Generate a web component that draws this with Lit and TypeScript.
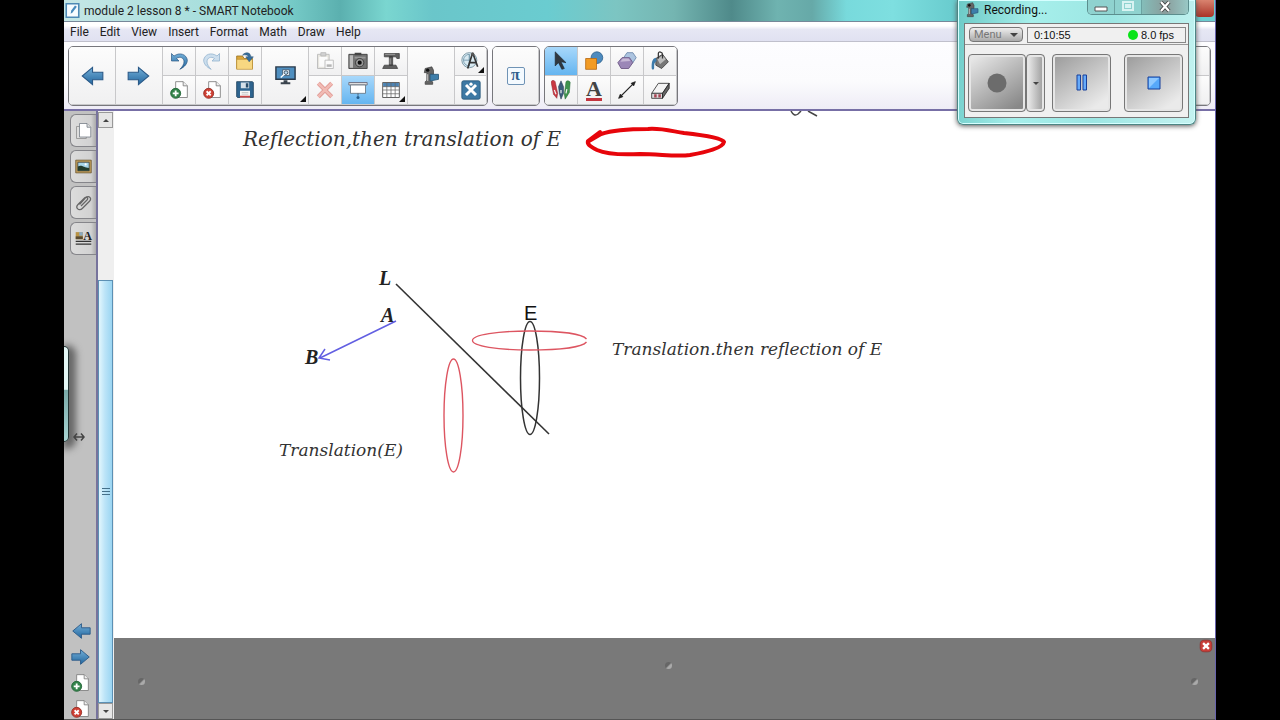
import { LitElement, html, css, svg } from "lit";
import { customElement } from "lit/decorators.js";
import { classMap } from "lit/directives/class-map.js";

const arrowRight = svg`<path d="M2 8.500h9.500V4l9.500 8-9.500 8v-4.500H2z" fill="url(#blue)" stroke="#2b5a88" stroke-width="1"/>`;
const page = svg`<path d="M8 2h9l5 5v14H8z" fill="#fff" stroke="#7b7b7b"/><path d="M17 2v5h5" fill="#eee" stroke="#7b7b7b"/>`;

const icons: Record<string, unknown> = {
  back: svg`<g transform="matrix(-1 0 0 1 24 0)">${arrowRight}</g>`,
  forward: arrowRight,
  undo: svg`<path d="M3 3v9h9L9 9c4-3 9-1 9 4 0 3-2 6-5 9 6-3 9-7 9-11C21 4 13 1 6 6z" fill="url(#blue)" stroke="#24527f" stroke-width=".8"/>`,
  redo: svg`<g opacity=".55" transform="matrix(-1 0 0 1 24 0)"><path d="M3 3v9h9L9 9c4-3 9-1 9 4 0 3-2 6-5 9 6-3 9-7 9-11C21 4 13 1 6 6z" fill="#a9cbe6" stroke="#4780b0"/></g>`,
  open: svg`<path d="M2 6h7l2 3h10v12H2z" fill="#dba73b" stroke="#9b7523"/><path d="M2 10h19v12H2z" fill="#f7d781" stroke="#b98d32" stroke-width=".8"/><path d="M9 5c4-5 10-3 10 2h3l-5 6-4-6h3c0-2-3-3-7-2z" fill="#376f9d" stroke="#264e70" stroke-width=".6"/>`,
  addPage: svg`${page}<circle cx="8" cy="16" r="6" fill="#33834a" stroke="#1d6131"/><path d="M8 12.500v7M4.500 16h7" stroke="#fff" stroke-width="2.200"/>`,
  deletePage: svg`${page}<circle cx="8" cy="16" r="6" fill="#cf4034" stroke="#922920"/><path d="M5.500 13.500l5 5m0-5l-5 5" stroke="#fff" stroke-width="2.200"/>`,
  save: svg`<path d="M2 2h19l1 1v18H3l-1-1z" fill="#2e648f" stroke="#21435f"/><path d="M7 3h10v7H7z" fill="#d5e0e8"/><path d="M13 4h3v5h-3z" fill="#294c69"/><path d="M6 13h12v8H6z" fill="#f7f7f7"/><path d="M6 19h12v2H6z" fill="#c44"/><path d="M8 15h8M8 17h8" stroke="#aaa" stroke-width=".7"/>`,
  monitor: svg`<path d="M2 3h20v13H2z" fill="#4f8fc0" stroke="#29394a" stroke-width="1.500"/><path d="M10 17h4v2h3v2H7v-2h3z" fill="#39434d"/><path d="M9 6h7v6H9z" fill="#e9f3fb" stroke="#345" stroke-width=".7"/><circle cx="12.500" cy="9" r="1.900" fill="#b9d8ef" stroke="#234" stroke-width=".8"/><path d="M11 10.500L7 14" stroke="#fff" stroke-width="1.500"/>`,
  paste: svg`<g opacity=".5"><path d="M3 4h14v17H3z" fill="#d8d5c8" stroke="#777"/><path d="M5 7h10v12H5z" fill="#fff"/><path d="M7 2h6v4H7z" fill="#aaa" stroke="#777"/><path d="M12 11h10v10H12z" fill="#fff" stroke="#777"/><path d="M14 16h6v3h-6z" fill="#777"/></g>`,
  camera: svg`<path d="M1 4h22v17H1z" fill="#747474" stroke="#383838"/><path d="M2 5h4v15H2z" fill="#bbb"/><path d="M8 2h8v3H8z" fill="#444"/><path d="M8 7h13v2H8z" fill="#999"/><circle cx="14" cy="14" r="5" fill="#999" stroke="#333"/><circle cx="14" cy="14" r="2.500" fill="#111"/>`,
  docCamera: svg`<path d="M4 3h18v6h-3l-1-2H4zM10 7h4v10h-4zM4 17h14l2 4H2z" fill="#606060" stroke="#343434" stroke-width=".8"/><path d="M5 4h12M11 9v7" stroke="#aaa"/>`,
  remove: svg`<g opacity=".65"><path d="M4 4l16 16M20 4L4 20" stroke="#d5675e" stroke-width="5"/><path d="M4 4l16 16M20 4L4 20" stroke="#ee9b91" stroke-width="3"/></g>`,
  screen: svg`<path d="M1 3h22v3H1z" fill="#ddd" stroke="#667"/><path d="M3 6h18v10H3z" fill="#fff" stroke="#66757f"/><path d="M12 16v3" stroke="#456"/><circle cx="12" cy="21" r="1.800" fill="#245d8b"/>`,
  table: svg`<path d="M2 3h20v18H2z" fill="#fff" stroke="#444"/><path d="M2.500 3.500h19V8h-19z" fill="#4c83b3"/><path d="M2 8h20M2 12h20M2 16.500h20M7 3v18M12 3v18M17 3v18" stroke="#666" stroke-width=".9"/>`,
  camcorder: svg`<path d="M5 3l8-2 2 4v5h-4v7l3 2v3H5v-3l2-2V8H4z" fill="#656565" stroke="#383838" stroke-width=".8"/><circle cx="8" cy="5" r="2" fill="#111"/><path d="M11 10h10v6l-10 2z" fill="#3e7eaa" stroke="#285777"/><path d="M8 10v8" stroke="#bbb" stroke-width="1.500"/>`,
  measure: svg`<circle cx="10" cy="11" r="9" fill="#d9eaf2" stroke="#6b8999"/><path d="M10 4a7 7 0 0 0 0 14zM10 4v14M3 11h7" fill="none" stroke="#7095a9"/><path d="M14 2l-6 19M14 2l6 17M10 14h9" fill="none" stroke="#353535" stroke-width="2"/><circle cx="14" cy="4" r="2" fill="#555"/>`,
  tools: svg`<rect x="1" y="1" width="22" height="22" rx="2" fill="#3d79a4" stroke="#285778"/><path d="M6 6l12 12M18 6L6 18" fill="none" stroke="#fff" stroke-width="3.500"/><circle cx="12" cy="5" r="2" fill="#fff"/>`,
  select: svg`<path d="M5 1l13 13-6-1 4 8-3 1-4-8-4 4z" fill="#303840" stroke="#1c242b" stroke-width=".7"/>`,
  shapes: svg`<circle cx="15.500" cy="8" r="7" fill="#4d8bbf" stroke="#2e618e"/><path d="M2 9h13v13H2z" fill="#f29b24" stroke="#b96a12"/>`,
  polygons: svg`<path d="M12 2h7l4 6-4 6h-7L8 8z" fill="#acc4e0" stroke="#6985a8"/><path d="M6 8h9l4 6-5 7H5l-4-7z" fill="#9b87b7" stroke="#66517f"/><path d="M4 13l3-4h7l2 3z" fill="#c7b9d6"/>`,
  fill: svg`<path d="M7 9l8-5 7 9-8 8-7-4z" fill="#777" stroke="#3d3d3d"/><path d="M9 10l6-5 4 5-7 6z" fill="#bdbdbd"/><path d="M10 9V3c0-3 5-2 5 1v5" fill="none" stroke="#333" stroke-width="1.500"/><path d="M7 8c-5 1-5 7-5 12 0 3 3 3 3 0 0-4 0-6 3-8z" fill="#3c7bab"/>`,
  pens: svg`<path d="M0 2c1-2 4-2 5 0l3 14-1 6-4-5z" fill="#c93842" stroke="#8b2530" stroke-width=".6"/><path d="M9 8l3-7 3 7v8l-3 7-2-7z" fill="#3b5c7b" stroke="#1f354b" stroke-width=".6"/><path d="M18 2c1-2 5-1 5 1l-1 12-5 8-1-6z" fill="#3f934e" stroke="#236634" stroke-width=".6"/><path d="M4 12l2 5M12 12v4M19 11l-1 5" stroke="#eee" stroke-width="1.500"/>`,
  line: svg`<path d="M4 20L20 4" stroke="#222" stroke-width="1.500"/><path d="M2 22l2-5 3 3zM22 2l-2 5-3-3z" fill="#222" stroke="#222"/>`,
  eraser: svg`<path d="M10 4h13l-8 12H2z" fill="#f4f4f4" stroke="#333"/><path d="M2 16h13v6H2z" fill="#ddd" stroke="#333"/><path d="M15 16l8-12v6l-8 12z" fill="#666" stroke="#222"/><path d="M5 17h3v4H5zM10 17h3v4h-3z" fill="#a64352"/>`,
  sorter: svg`<path d="M2 6h13v16H2z" fill="#ddd" stroke="#888"/><path d="M6 2h10l5 5v13H6z" fill="#fff" stroke="#6f7780"/><path d="M16 2v5h5" fill="#ddd" stroke="#6f7780"/>`,
  gallery: svg`<path d="M1 3h22v18H1z" fill="#bd9b58" stroke="#65502a"/><path d="M4 6h16v12H4z" fill="#a7d4e8" stroke="#333"/><path d="M4 12c6-3 8 2 16 2v4H4z" fill="#233b2c"/><circle cx="15" cy="9" r="1.500" fill="#fff"/>`,
  clip: svg`<path d="M6 14l8-9c5-4 9 1 5 5l-9 9c-5 5-10-1-6-5l9-9c3-2 5 1 3 3l-8 8" fill="none" stroke="#666" stroke-width="1.700"/>`,
  properties: svg`<path d="M1 3h10v10H1z" fill="#b99345"/><path d="M1 9h10v4H1z" fill="#594b32"/><path d="M6 3h5v5H6z" fill="#8baac0"/><path d="M1 16h22M1 20h22" stroke="#333" stroke-width="1.600"/>`,
  logo: svg`<path d="M2 1h20v22H2z" fill="#f7fcff" stroke="#4e8ab5" stroke-width="2.500"/><path d="M9 17l1-5 6-8 3 2-7 9z" fill="#488bbd"/>`,
  close: svg`<rect x="2" y="2" width="20" height="20" rx="7" fill="#c83e38" stroke="#8b2521"/><path d="M7 7l10 10M17 7L7 17" stroke="#fff" stroke-width="4"/>`,
};

const icon = (name: string, size = 20) => html`
  <svg class="icon" width=${size} height=${size} viewBox="0 0 24 24" aria-hidden="true">
    <defs><linearGradient id="blue" x1="0" y1="0" x2="0" y2="1"><stop stop-color="#73afd8"/><stop offset="1" stop-color="#23669e"/></linearGradient></defs>
    ${icons[name]}
  </svg>`;

type Tool = { name: string; label: string; tall?: boolean; active?: boolean; menu?: boolean; letter?: string };

const mainTools: Tool[] = [
  { name: "back", label: "Previous page", tall: true },
  { name: "forward", label: "Next page", tall: true },
  { name: "undo", label: "Undo" },
  { name: "addPage", label: "Add page" },
  { name: "redo", label: "Redo" },
  { name: "deletePage", label: "Delete page" },
  { name: "open", label: "Open" },
  { name: "save", label: "Save" },
  { name: "monitor", label: "View screens", tall: true, menu: true },
  { name: "paste", label: "Paste" },
  { name: "remove", label: "Delete" },
  { name: "camera", label: "Screen capture" },
  { name: "screen", label: "Screen shade", active: true },
  { name: "docCamera", label: "Document camera" },
  { name: "table", label: "Table", menu: true },
  { name: "camcorder", label: "Recorder", tall: true },
  { name: "measure", label: "Measurement tools", menu: true },
  { name: "tools", label: "Customize" },
];

const drawTools: Tool[] = [
  { name: "select", label: "Select", active: true },
  { name: "pens", label: "Pens" },
  { name: "shapes", label: "Shapes" },
  { name: "text", label: "Text", letter: "A" },
  { name: "polygons", label: "Regular polygons" },
  { name: "line", label: "Lines" },
  { name: "fill", label: "Fill" },
  { name: "eraser", label: "Eraser" },
];

const base = css`
  * { box-sizing: border-box; }
  button { font: inherit; color: inherit; margin: 0; padding: 0; border: 0; background: none; }
  .icon { display: block; flex: none; }
`;

@customElement("tool-bar")
export class ToolBar extends LitElement {
  static styles = [base, css`
    :host { display: flex; gap: 4px; padding: 4px; height: 69px; background: linear-gradient(#fdfdff, #fbfbfd 60%, #eeecf6); border-bottom: 2px solid #776fa6; }
    .group { display: grid; grid-template-rows: 29px 29px; grid-auto-flow: column; border: 1px solid #77777c; border-radius: 5px; overflow: hidden; background: #f8f8f8; flex: none; height: 60px; }
    .main { grid-template-columns: 47px 47px repeat(3, 33px) 47px repeat(3, 33px) 47px 32px; }
    .math { grid-template-columns: 46px; }
    .draw { grid-template-columns: repeat(4, 33px); }
    .end { grid-template-columns: 33px; margin-left: auto; }
    .tool { position: relative; display: flex; align-items: center; justify-content: center; background: linear-gradient(#fcfcfc, #f0f0f1); border-right: 1px solid #c8c8ca; border-bottom: 1px solid #c8c8ca; }
    .tall { grid-row: span 2; }
    .active { background: linear-gradient(#a8d8fb, #65b5f0); }
    .menu::after { content: ""; position: absolute; right: 2px; bottom: 2px; border-left: 6px solid transparent; border-bottom: 6px solid #111; }
    .letter { font: bold 22px/18px "Liberation Serif", serif; color: #444; border-bottom: 3px solid #c3343e; }
    .pi { display: block; font: bold 16px/14px "Liberation Serif", serif; color: #315f8d; border: 1px solid #6f93b5; background: #f4faff; width: 18px; height: 18px; border-radius: 2px; }
  `];

  private tool(t: Tool) {
    const size = t.name === "back" || t.name === "forward" ? 26 : t.name === "monitor" ? 23 : 20;
    return html`<button class=${classMap({ tool: true, tall: !!t.tall, active: !!t.active, menu: !!t.menu })} aria-label=${t.label}>
      ${t.letter ? html`<span class="letter">${t.letter}</span>` : icon(t.name, size)}
    </button>`;
  }

  render() {
    return html`
      <div class="group main">${mainTools.map((t) => this.tool(t))}</div>
      <div class="group math"><button class="tool tall" aria-label="Math tools"><span class="pi">π</span></button></div>
      <div class="group draw">${drawTools.map((t) => this.tool(t))}</div>
      <div class="group end"><button class="tool" aria-label="Move toolbar"></button><button class="tool" aria-label="More"></button></div>
    `;
  }
}

@customElement("recorder-window")
export class RecorderWindow extends LitElement {
  static styles = [base, css`
    :host { display: block; padding: 0 6px 6px; background: linear-gradient(100deg, #6bc9c6, #a6efeb 30%, #9ce6e3 60%, #c5f3f1); border: 1px solid #4d8584; border-top: 0; border-radius: 0 0 6px 6px; box-shadow: inset 0 0 0 1px #d5ffff, 0 1px 5px #555; font: 12px/16px Roboto, sans-serif; color: #111; }
    .title { display: flex; align-items: flex-start; height: 23px; }
    .name { display: flex; align-items: center; gap: 4px; flex: 1; height: 20px; }
    .windows { display: flex; border: 1px solid #5c8e8e; border-top: 0; border-radius: 0 0 5px 5px; overflow: hidden; height: 15px; }
    .windows button { width: 27px; display: flex; justify-content: center; align-items: center; border-right: 1px solid #6ba3a2; background: #8fd2cf; }
    .windows button:last-child { width: 46px; background: linear-gradient(90deg, #84bdb9, #8a9d9c, #98c8c5); border: 0; }
    .panel { border: 1px solid #777; background: #f0f0f0; }
    .status { display: flex; gap: 4px; padding: 3px 2px 2px 4px; height: 21px; border-bottom: 1px solid #999; }
    .drop { width: 54px; height: 15px; display: flex; align-items: center; justify-content: space-between; padding: 0 4px; border: 1px solid #777; border-radius: 4px; background: linear-gradient(#eee, #aaa); color: #777; font-size: 11px; line-height: 13px; }
    .caret { border: 4px solid transparent; border-top-color: #444; border-bottom: 0; }
    .readout { flex: 1; display: flex; align-items: center; gap: 3px; padding: 0 11px 0 6px; border: 1px solid #888; font: 11px/14px "Liberation Sans", sans-serif; height: 16px; }
    .lamp { width: 10px; height: 10px; border-radius: 50%; background: #08e416; margin-left: auto; }
    .actions { display: flex; padding: 9px 4px 4px 3px; height: 72px; }
    .key { height: 58px; width: 59px; border: 1px solid #777; border-radius: 4px; box-shadow: inset 0 0 0 2px #e6e6e6; background: linear-gradient(145deg, #999, #eaeaea 85%); display: flex; align-items: center; justify-content: center; }
    .record { background: linear-gradient(145deg, #eee, #888 90%); width: 58px; }
    .narrow { width: 19px; background: linear-gradient(90deg, #eee, #999); }
    .narrow .caret { border-width: 3px; border-bottom: 0; }
    .pause { margin-left: 7px; }
    .stop { margin-left: 13px; }
  `];

  render() {
    return html`
      <div class="title">
        <span class="name">${icon("camcorder", 16)}Recording...</span>
        <span class="windows">
          <button aria-label="Minimize"><svg width="16" height="14"><path d="M2 7h12v4H2z" fill="#fff" stroke="#555"/></svg></button>
          <button aria-label="Maximize"><svg width="16" height="14"><path d="M3 2h10v8H3zM6 5h4v2H6z" fill="none" stroke="#d9f3f2" stroke-width="2"/></svg></button>
          <button aria-label="Close"><svg width="16" height="14"><path d="M4 2l8 9M12 2l-8 9" stroke="#444" stroke-width="4"/><path d="M4 2l8 9M12 2l-8 9" stroke="#fff" stroke-width="2.200"/></svg></button>
        </span>
      </div>
      <div class="panel">
        <div class="status">
          <button class="drop">Menu<span class="caret"></span></button>
          <div class="readout"><span>0:10:55</span><span class="lamp"></span><span>8.0 fps</span></div>
        </div>
        <div class="actions">
          <button class="key record" aria-label="Record"><svg width="20" height="20"><circle cx="10" cy="10" r="9.500" fill="#6c6c6c"/></svg></button>
          <button class="key narrow" aria-label="Record options"><span class="caret"></span></button>
          <button class="key pause" aria-label="Pause"><svg width="12" height="18"><path d="M1 1h3.500v15H1zM7 1h3.500v15H7z" fill="#65aafa" stroke="#173f9b"/></svg></button>
          <button class="key stop" aria-label="Stop"><svg width="14" height="14"><path d="M1 1h12v12H1z" fill="#57a8fa" stroke="#173f9b"/><path d="M2 12V2h10z" fill="#8fc8ff"/></svg></button>
        </div>
      </div>`;
  }
}

@customElement("lesson-canvas")
export class LessonCanvas extends LitElement {
  static styles = css`
    :host { display: block; position: relative; background: #fff; overflow: hidden; }
    .drawing { position: absolute; inset: 0; width: 100%; height: 100%; }
    .formula { font: italic 17px "DejaVu Serif", serif; fill: #333; }
    .large { font-size: 20px; }
    .point { font: italic bold 20px "Liberation Serif", serif; fill: #222; }
    .shape { font: 20px "Liberation Sans", sans-serif; fill: #111; }
  `;

  render() {
    return html`<svg class="drawing" role="img" aria-label="Reflection and translation of E">
      <path d="M677 0q3 6 7 3l3-3M694 0l9 5" fill="none" stroke="#444" stroke-width="1.500"/>
      <text class="formula large" x="129" y="35">Reflection,then translation of E</text>
      <text class="formula" x="498" y="244">Translation.then reflection of E</text>
      <text class="formula" x="165" y="345">Translation(E)</text>
      <text class="point" x="265" y="174">L</text>
      <text class="point" x="267" y="211">A</text>
      <text class="point" x="191" y="253">B</text>
      <text class="shape" x="410" y="209">E</text>
      <path d="M475 30l12-7c12-4 28-5 47-5 13-1 23 2 36 4 19 2 38 5 40 9-1 6-18 10-34 13-14 2-30-1-50-1-20 1-34 0-43-4-8-4-10-6-9-9l12-9" fill="none" stroke="#e7050b" stroke-width="4" stroke-linejoin="round" stroke-linecap="round"/>
      <path d="M282 173l153 150" stroke="#333" stroke-width="1.600"/>
      <path d="M282 210l-76 37M211 238l-6 9 11 2" fill="none" stroke="#625fe2" stroke-width="1.500"/>
      <ellipse cx="416" cy="267" rx="9.500" ry="56.500" fill="none" stroke="#333" stroke-width="1.500"/>
      <path d="M472.500 228c-4-5-26-8-57-8-32 0-57 4-57 9.500s25 9.500 57 9.500c31 0 53-3 57-8" fill="none" stroke="#dd5561" stroke-width="1.300"/>
      <ellipse cx="339.500" cy="304.500" rx="9.500" ry="56.500" fill="none" stroke="#dd5561" stroke-width="1.400"/>
    </svg>`;
  }
}

@customElement("app-root")
export class AppRoot extends LitElement {
  static styles = [base, css`
    :host { display: block; background: #000; font: 12px/20px Roboto, sans-serif; color: #222; }
    .app { position: relative; display: flex; flex-direction: column; height: 100vh; margin: 0 64px; overflow: hidden; background: #fff; border-right: 1px solid #6863ad; }
    .title { display: flex; align-items: center; gap: 4px; height: 22px; padding-left: 1px; background: linear-gradient(90deg, #c5e6e5, #a4dedc 14%, #74c9c6 20%, #5bb0af 24%, #7ad6d0 28%, #6ac6ca 32%, #6accd0 42%, #7cc5c2 48%, #74b5b1 53%, #4f8a8a 58%, #6fb3b0 62%, #66a9a8 65%, #78dadc 68%, #7edfe0 72%, #6acdcf 77%); border-bottom: 1px solid #789; }
    .closeapp { width: 19px; height: 17px; margin: 0 1px 5px auto; background: linear-gradient(#d9836f, #a93327); border-radius: 0 0 4px 4px; }
    .menu { display: flex; gap: 11px; height: 20px; padding: 0 6px; background: linear-gradient(#fff 20%, #e6e7f4 40%, #e0e1f1); border-bottom: 1px solid #c0c0cc; }
    .body { flex: 1; display: flex; min-height: 0; border-bottom: 1px solid #555; }
    .side { width: 34px; display: flex; flex-direction: column; gap: 3px; padding: 3px 0 0 6px; background: #c1c1c1; border-right: 2px solid #77739c; flex: none; }
    .tab { height: 33px; display: flex; align-items: center; justify-content: center; border: 1px solid #85858a; border-right: 0; border-radius: 6px 0 0 6px; background: linear-gradient(90deg, #dcdcdc, #d2d2d2 80%, #aaa); flex: none; }
    .properties { display: grid; justify-items: end; align-items: start; }
    .properties > * { grid-area: 1 / 1; }
    .glyph { font: bold 12px/12px "Liberation Serif", serif; }
    .pages { display: flex; flex-direction: column; gap: 6px; margin-top: auto; }
    .pages button { height: 20px; display: flex; align-items: center; }
    .scroll { width: 16px; display: flex; flex-direction: column; padding: 1px 1px 0 0; background: #efefef; flex: none; }
    .step { height: 16px; display: flex; align-items: center; justify-content: center; border: 1px solid #999; background: #e6e6e6; flex: none; }
    .up { border: 3px solid transparent; border-bottom-color: #444; border-top: 0; }
    .down { border: 3px solid transparent; border-top-color: #444; border-bottom: 0; }
    .track { flex: 1; display: flex; flex-direction: column; }
    .before { flex: 152; }
    .thumb { flex: 422; display: flex; flex-direction: column; align-items: center; justify-content: center; gap: 2px; border: 1px solid #5c90b4; background: linear-gradient(90deg, #e2f6fd, #bce4f8 45%, #9ad5f2); }
    .grip { width: 8px; height: 1px; background: #44708a; }
    .work { flex: 1; min-width: 0; display: flex; flex-direction: column; }
    .canvas { flex: 1; }
    .shade { position: relative; height: 81px; background: #797979; flex: none; }
    .shade button { position: absolute; right: 2px; top: 1px; }
    .dot { position: absolute; width: 7px; height: 7px; border-radius: 50%; background: linear-gradient(135deg, #666 45%, #aaa 60%); }
    .left { left: 24px; bottom: 34px; }
    .middle { left: 50%; top: 24px; }
    .right { right: 17px; bottom: 34px; }
    .flyout { position: absolute; left: 0; top: 346px; width: 5px; height: 96px; border: 1px solid #233; border-left: 0; border-radius: 0 5px 5px 0; background: linear-gradient(#e4f7f6 45%, #7aaaa9 46%, #a9d5d4); box-shadow: 3px 3px 7px 4px #666; }
    .resize { position: absolute; left: 9px; top: 431px; }
    .recorder { position: absolute; right: 19px; top: 0; width: 239px; }
  `];

  render() {
    const menus = ["File", "Edit", "View", "Insert", "Format", "Math", "Draw", "Help"];
    return html`
      <div class="app">
        <header class="title">${icon("logo", 15)}<span>module 2 lesson 8 * - SMART Notebook</span><button class="closeapp" aria-label="Close"></button></header>
        <nav class="menu">${menus.map((m) => html`<button>${m}</button>`)}</nav>
        <tool-bar></tool-bar>
        <main class="body">
          <aside class="side">
            <button class="tab" aria-label="Page sorter">${icon("sorter", 18)}</button>
            <button class="tab" aria-label="Gallery">${icon("gallery", 17)}</button>
            <button class="tab" aria-label="Attachments">${icon("clip", 18)}</button>
            <button class="tab" aria-label="Properties"><span class="properties">${icon("properties", 17)}<span class="glyph">A</span></span></button>
            <div class="pages">
              <button aria-label="Previous page">${icon("back", 22)}</button>
              <button aria-label="Next page">${icon("forward", 22)}</button>
              <button aria-label="Add page">${icon("addPage", 20)}</button>
              <button aria-label="Delete page">${icon("deletePage", 20)}</button>
            </div>
          </aside>
          <div class="scroll">
            <button class="step" aria-label="Scroll up"><span class="up"></span></button>
            <div class="track"><div class="before"></div><div class="thumb"><span class="grip"></span><span class="grip"></span><span class="grip"></span></div></div>
            <button class="step" aria-label="Scroll down"><span class="down"></span></button>
          </div>
          <section class="work">
            <lesson-canvas class="canvas"></lesson-canvas>
            <div class="shade"><span class="dot left"></span><span class="dot middle"></span><span class="dot right"></span><button aria-label="Close shade">${icon("close", 14)}</button></div>
          </section>
        </main>
        <div class="flyout"></div>
        <svg class="resize" width="12" height="12" aria-hidden="true"><path d="M1 6h10M4 2.500L1 6l3 3.500M8 2.500L11 6 8 9.500" fill="none" stroke="#444" stroke-width="1.500"/></svg>
        <recorder-window class="recorder"></recorder-window>
      </div>`;
  }
}
